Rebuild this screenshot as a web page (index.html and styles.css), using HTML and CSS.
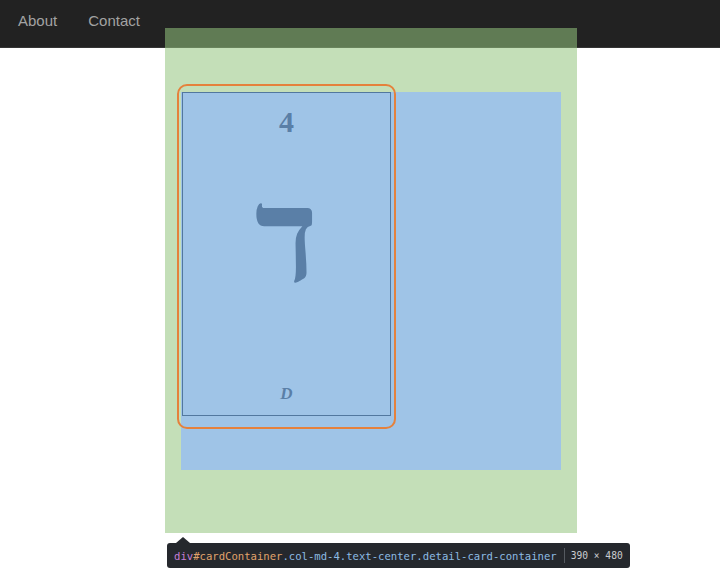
FILE: index.html
```html
<!DOCTYPE html>
<html>
<head>
<meta charset="utf-8">
<link rel="stylesheet" href="styles.css">
</head>
<body>
<nav class="navbar">
  <a class="nav-link" href="#">About</a>
  <a class="nav-link" href="#">Contact</a>
</nav>
<div class="stage">
  <div class="content-box">
    <div class="frame">
      <div class="card">
        <div class="card-number">4</div>
        <div class="card-letter" lang="he">ד</div>
        <div class="card-name">D</div>
      </div>
    </div>
  </div>
</div>
<div class="tooltip">
  <span class="tag">div</span><span class="id">#cardContainer</span><span class="cls">.col-md-4.text-center.detail-card-container</span>
  <span class="sep"></span>
  <span class="dims">390 × 480</span>
</div>
</body>
</html>
```
FILE: styles.css
```css
html, body {
  margin: 0;
  padding: 0;
  background: #ffffff;
  font-family: "Liberation Sans", Arial, sans-serif;
}

.navbar {
  height: 47px;
  background: #222222;
  border-bottom: 1px solid #353535;
  display: flex;
  align-items: flex-start;
  padding-left: 18px;
  gap: 31px;
  box-sizing: content-box;
}

.nav-link {
  color: #a3a3a3;
  text-decoration: none;
  font-size: 15px;
  line-height: 17px;
  margin-top: 12px;
}

.stage {
  position: relative;
  z-index: 1;
  margin-top: -20px;
  margin-left: 165px;
  width: 412px;
  height: 505px;
  box-sizing: border-box;
  padding: 64px 16px 63px 16px;
  background: rgba(147, 196, 125, 0.55);
}

.content-box {
  display: flow-root;
  height: 378px;
  background: #9fc4e7;
}

.frame {
  width: 209px;
  margin-top: -8px;
  margin-left: -4px;
  padding: 6px 3px 11px 3px;
  border: 2px solid #e5813c;
  border-radius: 10px;
}

.card {
  height: 324px;
  box-sizing: border-box;
  border: 1px solid #52789f;
  display: flex;
  flex-direction: column;
  align-items: center;
  color: #5a7fa7;
  font-family: "Liberation Serif", "Times New Roman", serif;
}

.card-number {
  font-weight: bold;
  font-size: 30px;
  line-height: 30px;
  margin-top: 14px;
}

.card-letter {
  font-weight: bold;
  font-size: 132px;
  line-height: 132px;
  margin-top: 34px;
}

.card-name {
  margin-top: auto;
  margin-bottom: 13px;
  font-style: italic;
  font-weight: bold;
  font-size: 17px;
  line-height: 17px;
}

.tooltip {
  position: relative;
  display: inline-flex;
  align-items: center;
  margin-top: 10px;
  margin-left: 167px;
  height: 25px;
  padding: 0 7px 0 7px;
  background: #25282d;
  border-radius: 3px;
  font-family: "DejaVu Sans Mono", "Liberation Mono", monospace;
  font-size: 10.6px;
  white-space: nowrap;
}

.tooltip::before {
  content: "";
  position: absolute;
  left: 9px;
  top: -6px;
  border-left: 7px solid transparent;
  border-right: 7px solid transparent;
  border-bottom: 6px solid #25282d;
}

.tag { color: #c77fd6; }
.id { color: #e0a36b; }
.cls { color: #8dbbe3; }

.sep {
  display: inline-block;
  width: 1px;
  height: 15px;
  background: #555a60;
  margin: 0 6px 0 7px;
}

.dims {
  color: #c9cbcf;
  font-size: 9.6px;
}
```
